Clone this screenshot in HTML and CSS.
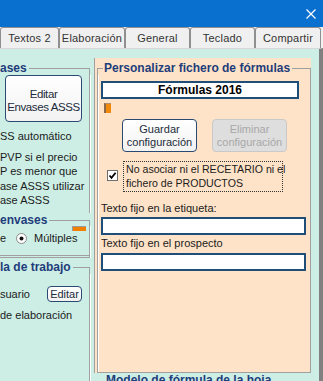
FILE: index.html
```html
<!DOCTYPE html>
<html lang="es">
<head>
    <meta charset="UTF-8">
    <title>Configuración</title>
    <link rel="stylesheet" href="styles.css">
</head>
<body>
    <!-- Window title bar -->
    <div class="titlebar">
        <svg class="close" width="10" height="10" viewBox="0 0 10 10">
            <path d="M0.5 0.5 L9.5 9.5 M9.5 0.5 L0.5 9.5" stroke="#fff" stroke-width="1.2" fill="none"/>
        </svg>
    </div>

    <!-- Tabs -->
    <div class="tabs">
        <div class="tab w59">Textos 2</div>
        <div class="tab w66">Elaboración</div>
        <div class="tab w65">General</div>
        <div class="tab w65">Teclado</div>
        <div class="tab w66">Compartir</div>
    </div>

    <div class="content">
        <!-- Left column (partly cut off) -->
        <div class="left">
            <div class="group">
                <div class="group-head"><span class="group-title">ases</span></div>
                <div class="group-body body-envases">
                    <button class="btn big-btn">Editar<br>Envases ASSS</button>
                    <div class="line first">SS automático</div>
                    <div class="para">PVP si el precio<br>P es menor que<br>ase ASSS utilizar<br>ase ASSS</div>
                </div>
            </div>

            <div class="group group-mode">
                <div class="group-head"><span class="group-title">envases</span></div>
                <div class="group-body body-mode">
                    <div class="orange-tab"></div>
                    <div class="radio-row">
                        <span class="cut">e</span>
                        <svg class="radio" width="11" height="11" viewBox="0 0 11 11">
                            <circle cx="5.5" cy="5.5" r="5" fill="#fff" stroke="#8a8a8a"/>
                            <circle cx="5.5" cy="5.5" r="2" fill="#111"/>
                        </svg>
                        <span>Múltiples</span>
                    </div>
                </div>
            </div>

            <div class="group group-work">
                <div class="group-head"><span class="group-title">la de trabajo</span></div>
                <div class="group-body body-work">
                    <div class="user-row">
                        <span class="user-label">suario</span>
                        <button class="btn small-btn">Editar</button>
                    </div>
                    <div class="line">de elaboración</div>
                </div>
            </div>
        </div>

        <!-- Right column -->
        <div class="right">
            <div class="peach">
                <div class="group group-formulas">
                    <div class="group-head"><span class="group-title">Personalizar fichero de fórmulas</span></div>
                    <div class="group-body body-formulas">
                        <div class="name-box">Fórmulas 2016</div>
                        <div class="slider"></div>
                        <div class="btn-row">
                            <button class="btn cfg-btn">Guardar<br>configuración</button>
                            <button class="btn cfg-btn" disabled>Eliminar<br>configuración</button>
                        </div>
                        <div class="check-row">
                            <svg class="check" width="11" height="11" viewBox="0 0 11 11">
                                <rect x="0.5" y="0.5" width="10" height="10" fill="#fff" stroke="#6d6d6d"/>
                                <path d="M2.5 5.5 L4.5 7.8 L8.6 2.8" stroke="#000" stroke-width="1.8" fill="none"/>
                            </svg>
                            <div class="check-label">No asociar ni el RECETARIO ni el<br>fichero de PRODUCTOS</div>
                        </div>
                        <div class="field-label">Texto fijo en la etiqueta:</div>
                        <div class="field"></div>
                        <div class="field-label second">Texto fijo en el prospecto</div>
                        <div class="field second"></div>
                    </div>
                </div>
            </div>
            <div class="next">Modelo de fórmula de la hoja</div>
        </div>
    </div>
</body>
</html>
```

FILE: styles.css
```css
/* Global */
body {
    margin: 0;
    width: 323px;
    height: 381px;
    overflow: hidden;
    font-family: "Liberation Sans", Arial, sans-serif;
    font-size: 11px;
    color: #1b1b1b;
    background-color: #cdeee5;
}

/* Title bar */
.titlebar {
    height: 27px;
    background: #0970d0;
    display: flex;
    justify-content: flex-end;
    align-items: center;
    padding-right: 7px;
}

/* Tabs */
.tabs {
    display: flex;
    height: 21px;
    background: #f0f0f0;
}
.tab {
    box-sizing: border-box;
    height: 21px;
    border: 1px solid #8f8f8f;
    border-bottom: none;
    border-radius: 3px 3px 0 0;
    background: #f0f0f0;
    color: #333;
    text-align: center;
    line-height: 20px;
    letter-spacing: 0.2px;
}
.w59 { width: 59px; }
.w65 { width: 65px; }
.w66 { width: 66px; }

/* Content area */
.content {
    display: flex;
    box-sizing: border-box;
    width: 323px;
    height: 333px;
    border-top: 1px solid #d8d8d8;
    border-right: 4px solid #808080;
}

/* Group boxes */
.group-head {
    display: flex;
    height: 14px;
}
.group-title {
    font-weight: bold;
    font-size: 12px;
    line-height: 14px;
    color: #1f3d7a;
    white-space: nowrap;
}
.group-head::after {
    content: "";
    flex: 1;
    align-self: flex-end;
    height: 6px;
    margin-left: 2px;
    border-top: 1px solid #a0a0a0;
    border-right: 1px solid #a0a0a0;
}
.group-body {
    border-right: 1px solid #a0a0a0;
    box-shadow: 1px 0 0 #fff;
}

/* Left column */
.left {
    width: 91px;
    flex: none;
    overflow: hidden;
    padding-top: 12px;
    display: flex;
    flex-direction: column;
}
.left .group {
    width: 90px;
}
.line {
    line-height: 14px;
    white-space: nowrap;
    margin-top: 6px;
}
.line.first {
    margin-top: 7px;
}
.para {
    margin-top: 7px;
    line-height: 14.4px;
    white-space: nowrap;
}
.body-envases {
    height: 138px;
}
.body-mode {
    height: 29px;
    border-bottom: 3px double #a0a0a0;
}
.orange-tab {
    margin: -1px 0 0 72px;
    width: 14px;
    height: 5px;
    box-sizing: border-box;
    background: #f08000;
    border-top: 1px solid #9a9a9a;
    border-left: 1px solid #9a9a9a;
}
.radio-row {
    display: flex;
    align-items: center;
    height: 14px;
    white-space: nowrap;
}
.cut {
    width: 16px;
}
.radio {
    margin-right: 7px;
}
.group-work {
    margin-top: 2px;
    flex: 1;
    display: flex;
    flex-direction: column;
}
.body-work {
    flex: 1;
    padding-top: 12px;
}
.user-row {
    display: flex;
    align-items: center;
    height: 16px;
}
.user-label {
    width: 47px;
}

/* Buttons */
.btn {
    font-family: "Liberation Sans", Arial, sans-serif;
    font-size: 11px;
    line-height: 13px;
    color: #1d2b3a;
    background: linear-gradient(#ffffff, #f2f2f2);
    border: 1px solid #2a4a72;
    border-radius: 4px;
    padding: 0;
    box-sizing: border-box;
}
.btn:disabled {
    background: #dedede;
    border-color: #c9c9c9;
    color: #a8a8a8;
}
.big-btn {
    display: block;
    margin-left: 5px;
    width: 77px;
    height: 47px;
    padding-top: 5px;
    letter-spacing: -0.4px;
    font-size: 11.5px;
}
.small-btn {
    width: 35px;
    height: 16px;
    line-height: 14px;
}

/* Right column */
.right {
    display: flex;
    flex-direction: column;
    margin-left: 3px;
}
.peach {
    flex: none;
    box-sizing: border-box;
    margin-top: 9px;
    width: 217px;
    height: 315px;
    padding-top: 3px;
    background: #fee3c8;
    border-left: 1px solid #a0a0a0;
    display: flex;
    flex-direction: column;
}
.group-formulas {
    flex: 1;
    margin-left: 2px;
    display: flex;
    flex-direction: column;
}
.group-formulas .group-head::before {
    content: "";
    width: 5px;
    align-self: flex-end;
    height: 6px;
    margin-right: 1px;
    border-top: 1px solid #a0a0a0;
    border-left: 1px solid #a0a0a0;
}
.body-formulas {
    flex: 1;
    border-left: 1px solid #a0a0a0;
    border-bottom: 1px solid #a0a0a0;
    box-shadow: inset 1px 0 0 #fff;
}
.name-box {
    box-sizing: border-box;
    margin: 6px 0 0 3px;
    width: 198px;
    height: 18px;
    border: 2px solid #1f4e79;
    background: #fff;
    color: #000;
    font-weight: bold;
    font-size: 12px;
    line-height: 14px;
    text-align: center;
}
.slider {
    box-sizing: border-box;
    margin: 4px 0 0 6px;
    width: 7px;
    height: 10px;
    background: #f28a0e;
    border-left: 2px solid #8a6a4a;
    border-top: 1px solid #b09070;
}
.btn-row {
    display: flex;
    gap: 15px;
    margin: 6px 0 0 24px;
}
.cfg-btn {
    width: 75px;
    height: 33px;
}
.check-row {
    display: flex;
    margin: 9px 0 0 9px;
}
.check {
    margin: 9px 5px 0 0;
    flex: none;
}
.check-label {
    box-sizing: border-box;
    width: 160px;
    height: 31px;
    border: 1px dotted #333;
    padding: 0 0 0 2px;
    line-height: 14px;
    font-size: 10.6px;
    white-space: nowrap;
}
.field-label {
    margin: 9px 0 0 3px;
    line-height: 14px;
}
.field-label.second {
    margin-top: 1px;
}
.field {
    box-sizing: border-box;
    margin: 2px 0 0 3px;
    width: 205px;
    height: 18px;
    border: 2px solid #1f4e79;
    background: #fff;
}
.field.second {
    margin-top: 3px;
}
.next {
    margin: 0 0 0 12px;
    font-weight: bold;
    font-size: 12px;
    line-height: 14px;
    color: #1f3d7a;
    white-space: nowrap;
}
```
